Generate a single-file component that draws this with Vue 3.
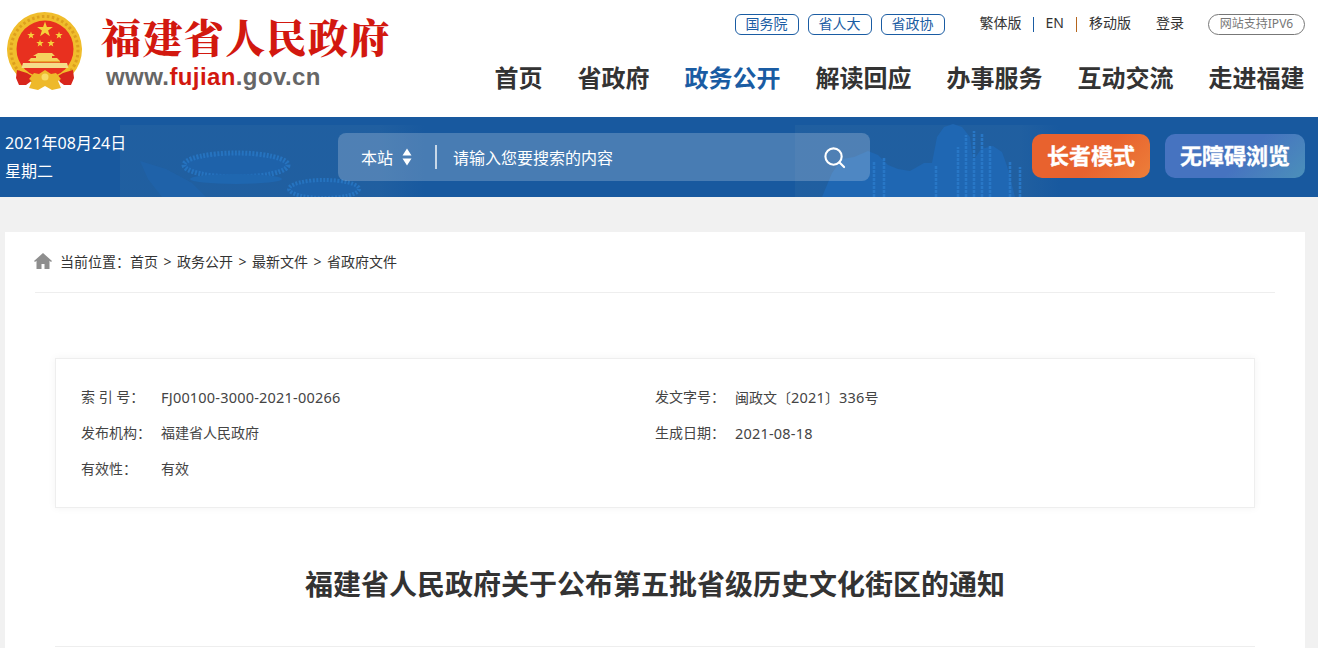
<script setup>
const topLinks = ["国务院", "省人大", "省政协"];
const navItems = ["首页", "省政府", "政务公开", "解读回应", "办事服务", "互动交流", "走进福建"];
const crumbs = ["首页", "政务公开", "最新文件", "省政府文件"];
// value parts flagged num get the slightly larger latin/digit size
const metaRows = [
  [
    { label: "索 引 号：", parts: [{ text: "FJ00100-3000-2021-00266", num: true }] },
    {
      label: "发文字号：",
      parts: [
        { text: "闽政文〔" },
        { text: "2021", num: true },
        { text: "〕" },
        { text: "336", num: true },
        { text: "号" },
      ],
    },
  ],
  [
    { label: "发布机构：", parts: [{ text: "福建省人民政府" }] },
    { label: "生成日期：", parts: [{ text: "2021-08-18", num: true }] },
  ],
  [{ label: "有效性：", parts: [{ text: "有效" }] }],
];
</script>

<template>
  <div class="page">
    <header class="head">
      <div class="brand">
        <svg class="emblem" viewBox="7 12 77 81" aria-hidden="true">
          <path d="M17 75a37.500 37.500 0 1 1 55 0l-6 5H23z" fill="#f0bd2c" />
          <circle cx="44.500" cy="50" r="33.500" fill="none" stroke="#dd9f1e" stroke-width="3" stroke-dasharray="2.500 2.500" />
          <circle cx="45" cy="49" r="28.500" fill="#e8301f" />
          <path d="M45 21.500l1.900 5.600h6l-4.800 3.500 1.800 5.700-4.900-3.500-4.900 3.500 1.800-5.700-4.800-3.500h6z" fill="#f6d23c" />
          <path d="M31 31.500l.9 2.600h2.800l-2.200 1.700.8 2.700-2.300-1.600-2.300 1.600.8-2.700-2.200-1.700h2.800z" fill="#f6d23c" />
          <path d="M59 31.500l.9 2.600h2.800l-2.200 1.700.8 2.700-2.300-1.600-2.300 1.600.8-2.700-2.200-1.700h2.800z" fill="#f6d23c" />
          <path d="M40 39.500l.9 2.600h2.800l-2.200 1.700.8 2.700-2.300-1.600-2.300 1.600.8-2.700-2.200-1.700h2.800z" fill="#f6d23c" />
          <path d="M51 39.500l.9 2.600h2.800l-2.200 1.700.8 2.700-2.300-1.600-2.300 1.600.8-2.700-2.200-1.700h2.800z" fill="#f6d23c" />
          <path d="M38 53h14l3 3h-3v2h5l3 3h-32l3-3h5v-2h-3z" fill="#f5d25e" />
          <path d="M30 61h30v1.500H30z" fill="#e8a52c" />
          <path d="M23 63h44l1.500 5h-47z" fill="#f5dc8a" />
          <path d="M17 70l10 3 5 3-2 6-4 3h-7l-3-7zM73 70l-10 3-5 3 2 6 4 3h7l3-7z" fill="#d8261c" />
          <path d="M29 79l5-6 5 1 6-4 6 4 5-1 5 6-3 2 3 7-9 2-7-4-7 4-9-2 3-7z" fill="#eeb92b" />
          <circle cx="45" cy="77" r="3.500" fill="#f8dc66" />
        </svg>
        <div class="brand-text">
          <div class="brand-name">福建省人民政府</div>
          <div class="brand-url">www.<span class="red">fujian</span>.gov.cn</div>
        </div>
      </div>
      <div class="head-right">
        <div class="toplinks">
          <a v-for="t in topLinks" :key="t" class="pill">{{ t }}</a>
          <span class="tool first">繁体版</span>
          <i class="sep"></i>
          <span class="tool">EN</span>
          <i class="sep orange"></i>
          <span class="tool">移动版</span>
          <span class="tool login">登录</span>
          <span class="ipv6">网站支持IPV6</span>
        </div>
        <nav class="nav">
          <a v-for="n in navItems" :key="n" :class="{ active: n === '政务公开' }">{{ n }}</a>
        </nav>
      </div>
    </header>

    <section class="band">
      <!-- faint city scenery behind the band -->
      <svg class="scenery" viewBox="0 0 1318 80" aria-hidden="true">
        <defs>
          <linearGradient id="panelFade" x1="0" x2="1" y1="0" y2="0">
            <stop offset="0" stop-color="#2f6aa3" stop-opacity="0.35" />
            <stop offset="0.85" stop-color="#2f6aa3" stop-opacity="0.35" />
            <stop offset="1" stop-color="#2f6aa3" stop-opacity="0" />
          </linearGradient>
        </defs>
        <rect x="120" y="8" width="305" height="72" fill="url(#panelFade)" />
        <rect x="795" y="8" width="265" height="72" fill="url(#panelFade)" />
        <path d="M140 44l26 8 26 14 14 14h-44l-14-18z" fill="#1f64ac" opacity="0.7" />
        <ellipse cx="236" cy="48" rx="52" ry="12" fill="#1e62aa" stroke="#2673bf" stroke-width="5" stroke-dasharray="2 1.500" />
        <ellipse cx="236" cy="62" rx="46" ry="5" fill="#1f67b0" />
        <ellipse cx="324" cy="72" rx="35" ry="9" fill="#1e62aa" stroke="#2673bf" stroke-width="4" stroke-dasharray="2 1.500" />
        <path
          d="M822 80l10-24 10-14 12-2 14-6 10 4 10 10 10 4 12 2 14-8 8 0 5-26 7-10 9-3 9 3 8 10 3 24 8-12 12-3 9 6 5 14 8 31z"
          fill="#1f67b3"
        />
        <path
          d="M958 80V30M966 80V18M974 80V14M982 80V16M990 80V28M874 80V44M884 80V40M1010 80V44M1020 80V50M936 80V48"
          stroke="#2877c6"
          stroke-width="2.500"
          stroke-dasharray="3 1"
        />
      </svg>
      <div class="date">
        <div>2021年08月24日</div>
        <div>星期二</div>
      </div>
      <div class="search">
        <span class="scope">本站</span>
        <svg class="updown" viewBox="0 0 10 18" aria-hidden="true">
          <path d="M5 .5l4.500 7H.5zM5 17.500l4.500-7H.5z" fill="#fff" />
        </svg>
        <i class="divider"></i>
        <span class="placeholder">请输入您要搜索的内容</span>
        <svg class="lens" viewBox="0 0 24 24" aria-hidden="true">
          <circle cx="11" cy="11" r="8.500" fill="none" stroke="#fff" stroke-width="2.200" />
          <path d="M17 17l5 5" stroke="#fff" stroke-width="2.200" stroke-linecap="round" />
        </svg>
      </div>
      <div class="modes">
        <a class="mode elder">长者模式</a>
        <a class="mode access">无障碍浏览</a>
      </div>
    </section>

    <main class="card">
      <div class="crumbs">
        <svg class="home" viewBox="0 0 18 16" aria-hidden="true">
          <path d="M9 0L0 8l1 1 1.500-1.200V16h5v-5h3v5h5V7.800L17 9l1-1z" fill="#8e8e8e" />
        </svg>
        <span>当前位置：</span>
        <template v-for="(c, i) in crumbs" :key="c">
          <span v-if="i" class="gt">&gt;</span>
          <span>{{ c }}</span>
        </template>
      </div>
      <div class="meta">
        <div v-for="(row, i) in metaRows" :key="i" class="meta-row">
          <div v-for="cell in row" :key="cell.label" class="meta-cell">
            <span class="meta-label">{{ cell.label }}</span>
            <span class="meta-value">
              <span v-for="(p, j) in cell.parts" :key="j" :class="{ num: p.num }">{{ p.text }}</span>
            </span>
          </div>
        </div>
      </div>
      <h1 class="title">福建省人民政府关于公布第五批省级历史文化街区的通知</h1>
      <div class="rule"></div>
    </main>
  </div>
</template>

<style>
html,
body {
  margin: 0;
  height: 100%;
  overflow: hidden;
  background: #f1f1f1;
}
</style>

<style scoped>
.page {
  height: 648px;
  overflow: hidden;
  background: #f1f1f1;
  color: #333;
  font-family: "Noto Sans", "Noto Sans CJK SC", sans-serif;
  font-size: 14px;
  text-spacing-trim: space-all;
}
a {
  color: inherit;
  text-decoration: none;
}

.head {
  height: 117px;
  box-sizing: border-box;
  padding: 0 13px 0 7px;
  background: #fff;
  display: flex;
  justify-content: space-between;
}
.brand {
  display: flex;
  padding-top: 12px;
}
.emblem {
  width: 77px;
  height: 81px;
}
.brand-text {
  margin-left: 17px;
}
.brand-name {
  font-family: "Noto Serif CJK SC", "Noto Sans CJK SC", serif;
  font-size: 40px;
  line-height: 48px;
  font-weight: 900;
  color: #d2180f;
  letter-spacing: 1.400px;
}
.brand-url {
  margin: 3px 0 0 5px;
  font-family: "Liberation Sans", sans-serif;
  font-size: 24px;
  line-height: 28px;
  font-weight: 700;
  color: #666;
  letter-spacing: 0.400px;
}
.red {
  color: #d2180f;
}

.head-right {
  display: flex;
  flex-direction: column;
  align-items: flex-end;
}
.toplinks {
  display: flex;
  align-items: center;
  margin-top: 14px;
  height: 21px;
}
.pill {
  width: 62px;
  height: 19px;
  margin-right: 9px;
  border: 1px solid #1a5ca3;
  border-radius: 6px;
  text-align: center;
  line-height: 17px;
  font-size: 14px;
  color: #1a5ca3;
}
.tool {
  padding-bottom: 3px;
  font-size: 14px;
  line-height: 18px;
  color: #333;
}
.tool.first {
  margin-left: 26px;
}
.sep {
  width: 1px;
  height: 15px;
  margin: 0 12px 1px 11px;
  background: #1a5ca3;
}
.sep.orange {
  background: #b5651d;
  margin: 0 12px 1px;
}
.login {
  margin-left: 25px;
}
.ipv6 {
  width: 95px;
  height: 19px;
  margin-left: 24px;
  border: 1px solid #777;
  border-radius: 11px;
  text-align: center;
  line-height: 17px;
  font-size: 12px;
  color: #777;
}
.nav {
  display: flex;
  gap: 35px;
  margin: 26px 0.500px 0 0;
  font-size: 24px;
  line-height: 34px;
  font-weight: 700;
  color: #333;
}
.nav .active {
  color: #1a5ca3;
}

.band {
  height: 80px;
  position: relative;
  overflow: hidden;
  background: #18599f;
  display: flex;
  color: #fff;
}
.scenery {
  position: absolute;
  left: 0;
  top: 0;
  width: 1318px;
  height: 80px;
}
.date,
.search,
.modes {
  position: relative;
}
.date {
  width: 338px;
  box-sizing: border-box;
  padding: 12px 0 0 5px;
  font-size: 16px;
  line-height: 28px;
}
.search {
  width: 532px;
  height: 48px;
  margin-top: 16px;
  border-radius: 8px;
  background: rgba(255, 255, 255, 0.21);
  display: flex;
  align-items: center;
  font-size: 16px;
}
.scope {
  margin-left: 23px;
}
.updown {
  width: 10px;
  height: 18px;
  margin-left: 9px;
}
.divider {
  width: 2px;
  height: 24px;
  margin: 0 16px 0 23px;
  background: rgba(255, 255, 255, 0.7);
}
.placeholder {
  flex: 1;
}
.lens {
  width: 23px;
  height: 23px;
  margin-right: 24px;
}
.modes {
  margin-left: auto;
  margin-right: 13px;
  display: flex;
  gap: 15px;
  padding-top: 17px;
}
.mode {
  height: 44px;
  border-radius: 10px;
  text-align: center;
  line-height: 42px;
  font-size: 22px;
  font-weight: 700;
  color: #fff;
  -webkit-text-stroke: 0.3px #fff;
}
.elder {
  width: 118px;
  background: linear-gradient(135deg, #e8622e 55%, #ec7f3a);
}
.access {
  width: 140px;
  background: linear-gradient(135deg, #4673c0 55%, #4b90ba);
}

.card {
  margin: 35px 13px 0 5px;
  padding: 0 30px;
  height: 500px;
  background: #fff;
}
.crumbs {
  height: 61px;
  box-sizing: border-box;
  padding-bottom: 2px;
  border-bottom: 1px solid #eee;
  display: flex;
  align-items: center;
  font-size: 14px;
  color: #333;
}
.home {
  width: 18px;
  height: 16px;
  margin-right: 7px;
  margin-left: -1px;
  margin-right: 8px;
}
.gt {
  margin: 0 5.500px;
}
.meta {
  margin: 65px 20px 0;
  padding: 20px 25px;
  height: 108px;
  border: 1px solid #eee;
  box-shadow: 0 0 8px rgba(0, 0, 0, 0.05);
}
.meta-row {
  display: flex;
  height: 36px;
  align-items: center;
}
.meta-cell {
  width: 574px;
  display: flex;
  line-height: 20px;
  color: #444;
}
.meta-label {
  width: 80px;
}
.num {
  font-size: 14.500px;
  letter-spacing: 0.200px;
}
.title {
  margin: 56px 0 0;
  text-align: center;
  font-size: 28px;
  line-height: 40px;
  font-weight: 700;
  color: #333;
}
.rule {
  margin: 42px 20px 0;
  border-top: 1px solid #eee;
}
</style>
